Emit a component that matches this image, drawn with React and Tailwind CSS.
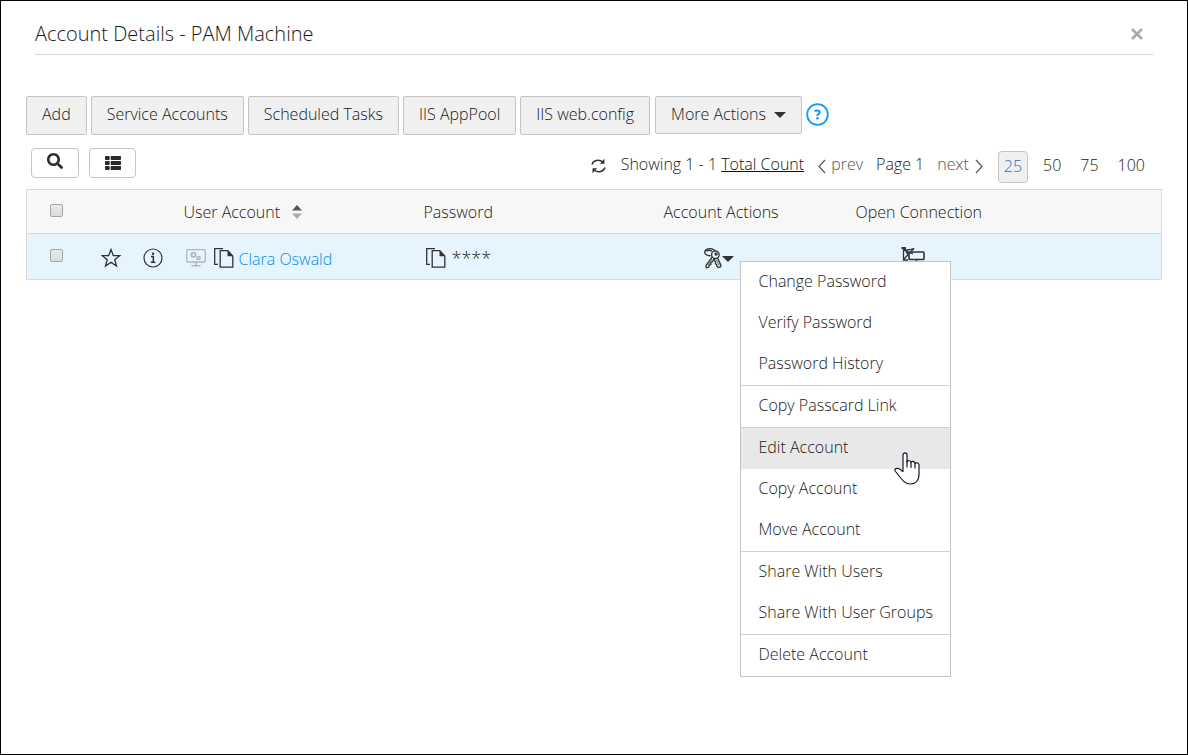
import React from 'react';
import { FaSearch, FaThList } from 'react-icons/fa';

const toolbar = ['Add', 'Service Accounts', 'Scheduled Tasks', 'IIS AppPool', 'IIS web.config'];

const menuGroups = [
  ['Change Password', 'Verify Password', 'Password History'],
  ['Copy Passcard Link'],
  ['Edit Account', 'Copy Account', 'Move Account'],
  ['Share With Users', 'Share With User Groups'],
  ['Delete Account'],
];

const pageSizes = ['50', '75', '100'];

export default function App() {
  return (
    <div className="min-h-screen border border-black bg-white px-[25px] font-['Open_Sans','Noto_Sans',sans-serif] text-base leading-6 font-light text-[#1a1a1a]">
      <header className="mx-[9px] flex h-[54px] items-center justify-between border-b border-[#d6d6d6] pt-3 pr-[10px]">
        <h1 className="text-xl font-light">Account Details - PAM Machine</h1>
        <button type="button" aria-label="Close" className="text-[#aaa]">
          <CloseIcon />
        </button>
      </header>

      <div className="mt-[41px] flex items-start gap-1">
        {toolbar.map((label) => (
          <button key={label} type="button" className="h-[39px] rounded-xs border border-[#c4c4c4] bg-[#f0f0f0] px-[15px] pb-[3px] whitespace-nowrap">
            {label}
          </button>
        ))}
        <button type="button" className="ml-px flex h-[38px] items-center gap-2 rounded-xs border border-[#c4c4c4] bg-[#f0f0f0] px-[15px] pb-[2px] whitespace-nowrap">
          More Actions
          <CaretIcon />
        </button>
        <button type="button" aria-label="Help" className="mt-[7px] text-[#139df0]">
          <HelpIcon />
        </button>
      </div>

      <div className="mt-3 flex h-[42px] items-start justify-between pl-[5px]">
        <div className="flex gap-[10px] pt-px text-[#2b2b2b]">
          <button type="button" aria-label="Search" className="flex h-[30px] w-12 items-center justify-center rounded-sm border border-[#c4c4c4] pb-1">
            <FaSearch size={16} />
          </button>
          <button type="button" aria-label="Choose columns" className="flex h-[30px] w-[47px] items-center justify-center rounded-sm border border-[#c4c4c4]">
            <FaThList size={16} />
          </button>
        </div>

        <div className="flex items-start gap-[13px] pt-[5px] pr-[17px] whitespace-nowrap">
          <button type="button" aria-label="Refresh" className="mt-[6px] mr-[2px] text-[#333]">
            <RefreshIcon />
          </button>
          <span>
            Showing 1 - 1 <a href="#total" className="text-[#111] underline">Total Count</a>
          </span>
          <a href="#prev" className="flex items-center gap-[5px] text-[#555]">
            <Chevron d="M8 1L2 7.500L8 14" />
            prev
          </a>
          <span>Page 1</span>
          <a href="#next" className="flex items-center gap-[5px] text-[#555]">
            next
            <Chevron d="M2 1L8 7.500L2 14" />
          </a>
          <div className="-mt-px ml-[2px] flex items-start gap-[19px]">
            <a href="#25" className="-mr-1 h-8 rounded-sm border border-[#c4c4c4] bg-[#f0f0f0] px-[5px] pt-[2px] text-[#1f6fc4]">25</a>
            {pageSizes.map((size) => (
              <a key={size} href={`#${size}`} className="pt-[2px]">{size}</a>
            ))}
          </div>
        </div>
      </div>

      <table className="w-full table-fixed border-collapse border border-[#d9d9d9] text-left">
        <thead>
          <tr className="h-[44px] border-b border-[#d9d9d9] bg-[#f7f7f7]">
            <th className="w-[74px] pl-[23px]">
              <Checkbox label="Select all accounts" />
            </th>
            <th className="w-[42px]" />
            <th className="w-[41px]" />
            <th className="w-[240px] font-light">
              <span className="flex items-center gap-3">
                User Account
                <SortIcon />
              </span>
            </th>
            <th className="w-[240px] font-light">Password</th>
            <th className="w-[192px] font-light">Account Actions</th>
            <th className="font-light">Open Connection</th>
          </tr>
        </thead>
        <tbody>
          <tr className="h-[46px] bg-[#e6f4fd]">
            <td className="pl-[23px]">
              <Checkbox label="Select Clara Oswald" />
            </td>
            <td className="pt-[3px]">
              <button type="button" aria-label="Favourite" className="block text-[#333]">
                <StarIcon />
              </button>
            </td>
            <td className="pt-[3px]">
              <button type="button" aria-label="Account info" className="block text-[#333]">
                <InfoIcon />
              </button>
            </td>
            <td className="pt-[3px]">
              <div className="flex items-center">
                <MonitorIcon />
                <button type="button" aria-label="Copy user name" className="mr-[5px] ml-2">
                  <CopyIcon />
                </button>
                <a href="#account" className="pt-[2px] text-[#0590e6]">Clara Oswald</a>
              </div>
            </td>
            <td className="pt-[3px]">
              <div className="flex items-center gap-[6px]">
                <button type="button" aria-label="Copy password" className="ml-[2px]">
                  <CopyIcon />
                </button>
                <span className="text-lg">****</span>
              </div>
            </td>
            <td className="pt-[3px]">
              <div className="relative pl-10">
                <button type="button" aria-label="Account actions" aria-haspopup="menu" className="flex items-center text-[#333]">
                  <KeysIcon />
                  <CaretIcon />
                </button>
                <ActionsMenu />
              </div>
            </td>
            <td className="pt-[3px]">
              <button type="button" aria-label="Open connection" className="ml-[45px] block text-[#333]">
                <ConnectionIcon />
              </button>
            </td>
          </tr>
        </tbody>
      </table>
    </div>
  );
}

function ActionsMenu() {
  return (
    <div role="menu" className="absolute top-[14px] left-[76px] z-10 w-[211px] divide-y divide-[#d0d0d0] border border-[#c4c4c4] bg-white">
      {menuGroups.map((group) => (
        <div key={group[0]}>
          {group.map((item) => (
            <button
              key={item}
              type="button"
              role="menuitem"
              className={`relative block h-[41px] w-full pb-[3px] pl-[18px] text-left whitespace-nowrap ${item === 'Edit Account' ? 'bg-[#e8e8e8]' : ''}`}
            >
              {item}
              {item === 'Edit Account' && (
                <span className="absolute top-6 right-[30px] z-10">
                  <HandCursor />
                </span>
              )}
            </button>
          ))}
        </div>
      ))}
    </div>
  );
}

function Checkbox({ label }) {
  return (
    <input
      type="checkbox"
      aria-label={label}
      className="mb-[3px] block size-[13px] appearance-none rounded-xs border border-[#a6a6a6] bg-linear-to-b from-[#e9e9e9] to-[#dcdcdc]"
    />
  );
}

function Chevron({ d }) {
  return (
    <svg width="9" height="15" viewBox="0 0 9 15" fill="none" stroke="currentColor" strokeWidth="1.200" className="mt-[5px]">
      <path d={d} />
    </svg>
  );
}

function CloseIcon() {
  return (
    <svg width="12" height="12" viewBox="0 0 12 12" fill="none" stroke="currentColor" strokeWidth="2.600">
      <path d="M1 1L11 11M11 1L1 11" />
    </svg>
  );
}

function CaretIcon() {
  return (
    <svg width="12" height="6" viewBox="0 0 12 6" fill="#333" className="mt-[2px]">
      <path d="M0 0H12L6 6Z" />
    </svg>
  );
}

function HelpIcon() {
  return (
    <svg width="23" height="23" viewBox="0 0 23 23" fill="none" stroke="currentColor">
      <circle cx="11.500" cy="11.500" r="10.300" strokeWidth="1.800" />
      <path d="M8.700 8.200C9.600 7.300 13.700 6.700 13.700 9.300C13.700 11 11.400 11 11.400 13" strokeWidth="2.100" />
      <circle cx="11.400" cy="15.300" r="1.300" fill="currentColor" stroke="none" />
    </svg>
  );
}

function RefreshIcon() {
  return (
    <svg width="15" height="16" viewBox="0 0 15 16" fill="none" stroke="currentColor" strokeWidth="1.500">
      <path d="M1 6.500C2 2.500 8 0.800 12 4" />
      <path d="M14 9.500C13 13.500 7 15.200 3 12" />
      <path d="M13.500 0.800V5.800H8.800Z" fill="currentColor" stroke="none" />
      <path d="M1.500 15.200V10.200H6.200Z" fill="currentColor" stroke="none" />
    </svg>
  );
}

function SortIcon() {
  return (
    <svg width="10" height="14" viewBox="0 0 10 14">
      <path d="M5 0L10 5.500H0Z" fill="#555" />
      <path d="M0 8.500H10L5 14Z" fill="#aaa" />
    </svg>
  );
}

function StarIcon() {
  return (
    <svg width="20" height="20" viewBox="0 0 20 20" fill="none" stroke="currentColor" strokeWidth="1.300">
      <path d="M10 1.500L12.300 7.500L18.700 7.700L13.700 11.700L15.500 18L10 14.400L4.500 18L6.300 11.700L1.300 7.700L7.700 7.500Z" />
    </svg>
  );
}

function InfoIcon() {
  return (
    <svg width="20" height="20" viewBox="0 0 20 20" fill="none" stroke="currentColor">
      <circle cx="10" cy="10" r="9" strokeWidth="1.200" />
      <circle cx="10" cy="5.800" r="1.200" fill="currentColor" stroke="none" />
      <path d="M8 8.500H10.300V14M7.800 14.200H12.400" strokeWidth="1.500" />
    </svg>
  );
}

function MonitorIcon() {
  return (
    <svg width="20" height="18" viewBox="0 0 20 18" fill="none" stroke="#b4b4b4" strokeWidth="1.300" className="ml-[2px]">
      <rect x="0.700" y="0.700" width="18.600" height="12.300" rx="1" />
      <circle cx="7.500" cy="5.800" r="2" strokeWidth="1.500" />
      <path d="M7.500 2.700V4M7.500 7.600V9M4.500 5.800H5.500M9.500 5.800H10.500M5.300 3.600L6 4.300M9.700 3.600L9 4.300M5.300 8L6 7.300" />
      <circle cx="12.500" cy="9" r="1.600" strokeWidth="1.500" />
      <path d="M10 13V16.500M5.500 16.800H14.500" strokeWidth="1.600" />
    </svg>
  );
}

function CopyIcon() {
  return (
    <svg width="20" height="20" viewBox="0 0 20 20" fill="none" stroke="#333" strokeWidth="1.300">
      <path d="M9 0.700H0.700V16.300H4" />
      <path d="M6.200 2.700H13.800L18.800 8V19.200H6.200Z" />
      <path d="M13.500 2.700L19 8.300H13.500Z" fill="#333" stroke="none" />
    </svg>
  );
}

function KeysIcon() {
  return (
    <svg width="18" height="22" viewBox="0 0 19 22" fill="none" stroke="currentColor" strokeWidth="1.400">
      <path d="M7 8.500C3.500 9 0.500 7 0.800 4.500C1.200 1.500 7 0 10 2C11.300 2.800 11.700 3.500 11.800 4" />
      <path d="M2.500 3.800C4 2.500 7 2.500 8.300 4" />
      <circle cx="12" cy="7.500" r="4" />
      <circle cx="12.800" cy="6.700" r="1.100" />
      <path d="M8.500 10L2 19L2.500 21.300L5 20.800L5.700 18.500L7.300 17.700L7.200 16L8.800 15L11.500 11.400" />
      <path d="M10 11.200L12.200 15.500L12 17L13.400 18L13.600 19.800L15.300 21L17.600 20.300L17.800 18.500L14.300 11" />
      <path d="M8.800 12L4 19M12.800 12.500L16 19" strokeWidth="0.800" />
    </svg>
  );
}

function ConnectionIcon() {
  return (
    <svg width="24" height="22" viewBox="0 0 24 22" fill="none" stroke="currentColor" strokeWidth="1.300">
      <path d="M1 1.500L4 3M4 2.800C7 3.500 9 3 13 1.500M2.500 3V13H7M2.500 3L12 7M13 1.500L3 12M5 4.500L7 8" />
      <path d="M0.500 1H4V4" strokeWidth="1.800" />
      <rect x="8" y="5" width="15" height="7.500" rx="0.800" strokeWidth="1.600" />
      <path d="M15.500 12.500V18M11 18.500H20" />
    </svg>
  );
}

function HandCursor() {
  return (
    <svg width="26" height="33" viewBox="0 0 26 33" fill="#fff" stroke="#16162b" strokeWidth="1.200" strokeLinejoin="round" strokeLinecap="round">
      <path d="M9 19.500V3C9 0.200 13 0.200 13 3V10C14 8 17 8.500 17 10.300C18.500 8.800 21 9.500 21 11.300C22.500 10.300 25 11 25 13V22C25 29 21 32 16.500 32C12 32 9.500 29.500 7.500 27L1.500 19.500C-0.200 17 2 15.800 4.500 16.500C6.500 17.200 7.500 18.500 9 19.500Z" />
      <path d="M13 9V15M17 10.300V15.500M21 11.300V16" fill="none" />
    </svg>
  );
}
